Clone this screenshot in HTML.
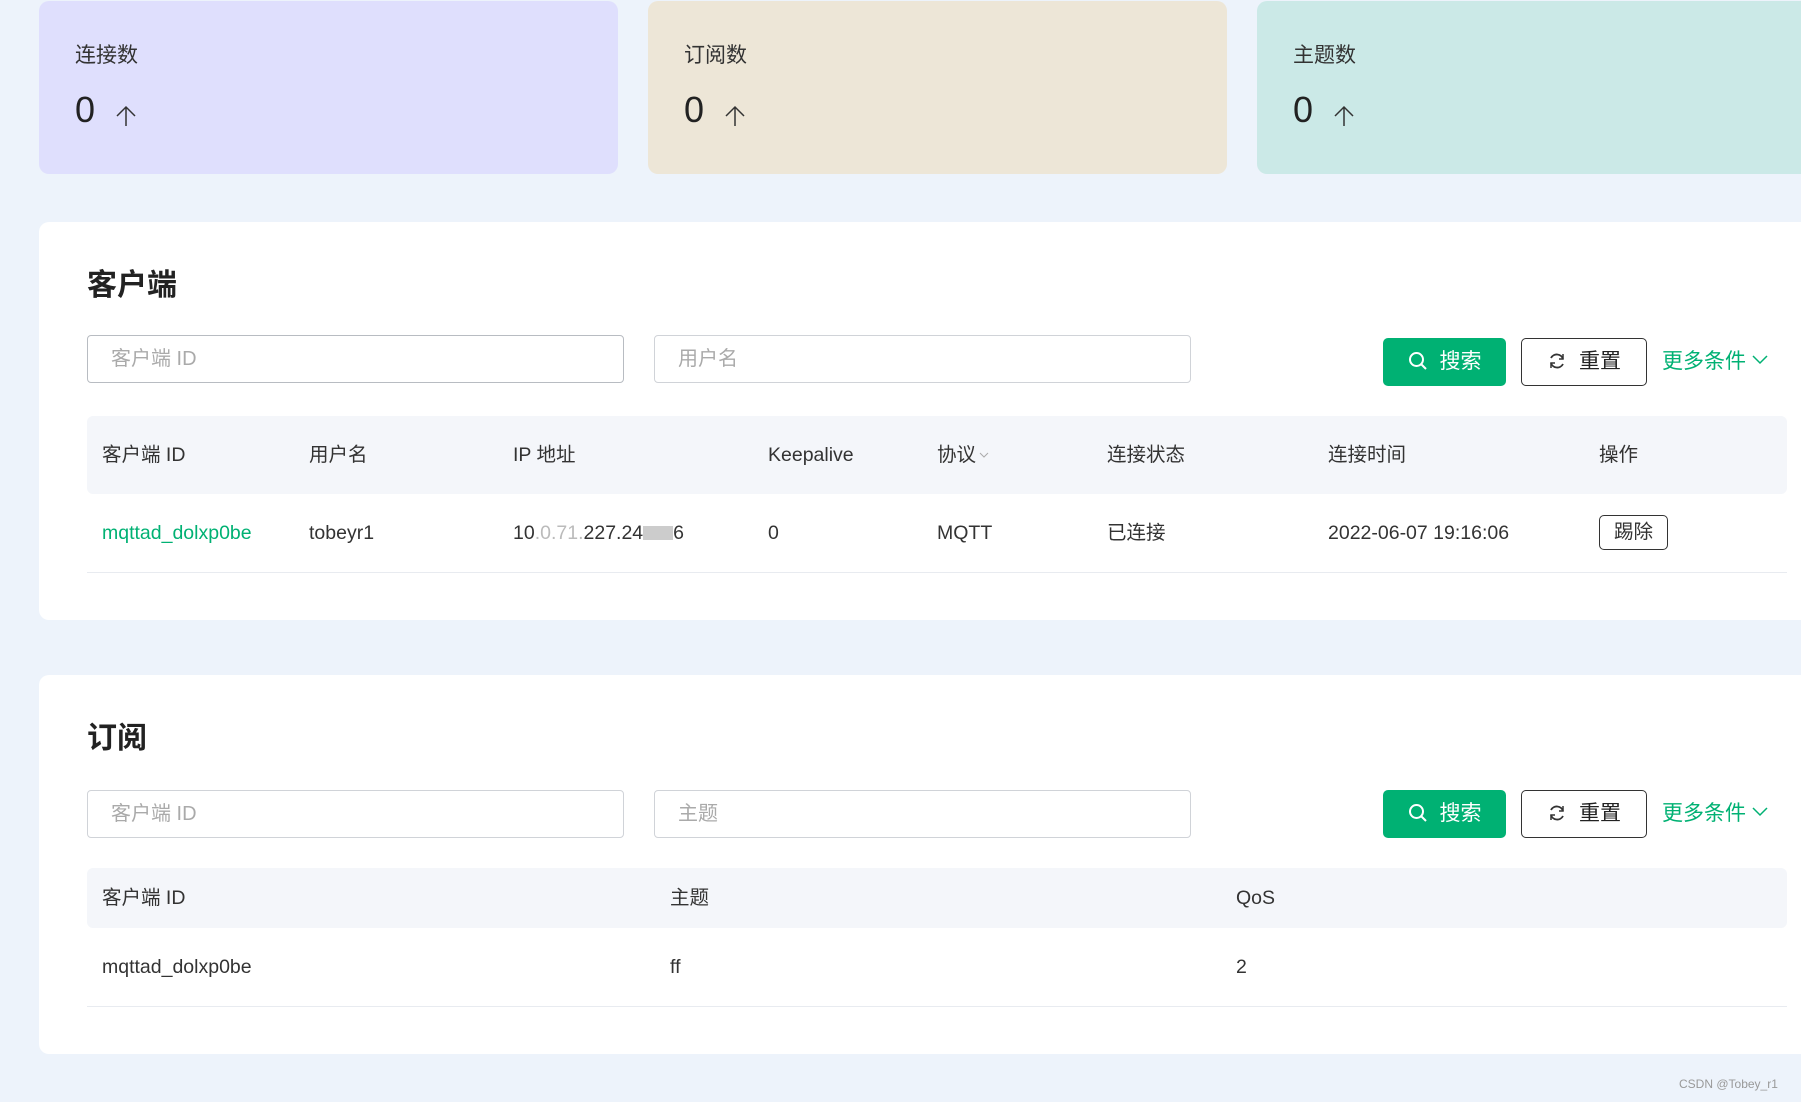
<!DOCTYPE html>
<html><head><meta charset="utf-8"><style>
*{box-sizing:border-box;margin:0;padding:0}
body{width:1801px;height:1102px;background:#edf3fb;font-family:"Liberation Sans","Noto Sans CJK SC",sans-serif;color:#333;position:relative;overflow:hidden}
.abs{position:absolute}
.card{position:absolute;top:1px;height:173px;border-radius:10px}
.card .l{position:absolute;left:36px;top:38px;font-size:21px;color:#333}
.card .n{position:absolute;left:36px;top:88px;font-size:36px;color:#222}
.card .a{position:absolute;left:76px;top:104px}
.panel{position:absolute;left:39px;width:1780px;background:#fff;border-radius:10px}
.title{position:absolute;left:48px;font-size:30px;font-weight:bold;color:#222;line-height:40px}
.inp{position:absolute;height:48px;border:1px solid #d0d3d8;border-radius:4px;font-size:20px;color:#aaa;padding:0 0 0 23px;line-height:46px}
.btn{position:absolute;height:48px;border-radius:5px;font-size:21px;line-height:48px;text-align:center}
.g{background:#00b173;color:#fff}
.o{border:1px solid #333;color:#222;line-height:46px}
.more{position:absolute;font-size:21px;color:#00b173;line-height:30px}
.th{position:absolute;left:48px;width:1700px;background:#f4f6fa;border-radius:6px}
.c{position:absolute;font-size:19.5px;color:#333;white-space:nowrap;line-height:26px;height:26px}
.line{position:absolute;left:48px;width:1700px;height:1px;background:#e8ebf0}
</style></head><body>
<svg width="0" height="0" style="position:absolute"><defs><symbol id="ar" viewBox="0 0 22 22"><path d="M2 11L11 2L20 11M11 2V21" fill="none" stroke="#333" stroke-width="1.5"/></symbol></defs></svg>
<div class="card" style="left:39px;width:579px;background:#dfdffd"><div class="l">连接数</div><div class="n">0</div><svg class="a" width="22" height="22"><use href="#ar"/></svg></div>
<div class="card" style="left:648px;width:579px;background:#ede6d7"><div class="l">订阅数</div><div class="n">0</div><svg class="a" width="22" height="22"><use href="#ar"/></svg></div>
<div class="card" style="left:1257px;width:600px;background:#cbe9e7"><div class="l">主题数</div><div class="n">0</div><svg class="a" width="22" height="22"><use href="#ar"/></svg></div>

<div class="panel" style="top:222px;height:398px">
 <div class="title" style="top:44px">客户端</div>
 <div class="inp" style="left:48px;top:113px;width:537px;border-color:#b8bcc2">客户端 ID</div>
 <div class="inp" style="left:615px;top:113px;width:537px">用户名</div>
 <div class="btn g" style="left:1344px;top:116px;width:123px"><svg width="20" height="20" viewBox="0 0 20 20" style="vertical-align:-3px;margin-right:12px"><circle cx="8.5" cy="8.5" r="6.5" fill="none" stroke="#fff" stroke-width="2"/><path d="M13.5 13.5L18 18" stroke="#fff" stroke-width="2"/></svg>搜索</div>
 <div class="btn o" style="left:1482px;top:116px;width:126px"><svg width="20" height="20" viewBox="0 0 20 20" style="vertical-align:-3px;margin-right:12px"><path d="M16 8A6.5 6.5 0 0 0 4 7M4 12a6.5 6.5 0 0 0 12 1" fill="none" stroke="#333" stroke-width="1.8"/><path d="M16 3v5h-4M4 17v-5h4" fill="none" stroke="#333" stroke-width="1.5"/></svg>重置</div>
 <div class="more" style="left:1623px;top:125px">更多条件 <svg width="16" height="10" viewBox="0 0 16 10" style="vertical-align:3px"><path d="M1 1L8 8L15 1" fill="none" stroke="#00b173" stroke-width="1.5"/></svg></div>
 <div class="th" style="top:194px;height:78px"></div>
 <div class="c" style="left:63px;top:220px">客户端 ID</div>
 <div class="c" style="left:270px;top:220px">用户名</div>
 <div class="c" style="left:474px;top:220px">IP 地址</div>
 <div class="c" style="left:729px;top:220px">Keepalive</div>
 <div class="c" style="left:898px;top:220px">协议<svg width="10" height="6" viewBox="0 0 10 6" style="vertical-align:3px;margin-left:3px"><path d="M1 1L5 5L9 1" fill="none" stroke="#aaa"/></svg></div>
 <div class="c" style="left:1068px;top:220px">连接状态</div>
 <div class="c" style="left:1289px;top:220px">连接时间</div>
 <div class="c" style="left:1560px;top:220px">操作</div>
 <div class="c" style="left:63px;top:298px;color:#00b173">mqttad_dolxp0be</div>
 <div class="c" style="left:270px;top:298px">tobeyr1</div>
 <div class="c" style="left:474px;top:298px">10<span style="color:#bbb">.0.71.</span>227.24<span style="display:inline-block;width:30px;height:14px;background:#ccc;vertical-align:-1px"></span>6</div>
 <div class="c" style="left:729px;top:298px">0</div>
 <div class="c" style="left:898px;top:298px">MQTT</div>
 <div class="c" style="left:1068px;top:298px">已连接</div>
 <div class="c" style="left:1289px;top:298px">2022-06-07 19:16:06</div>
 <div class="abs" style="left:1560px;top:293px;width:69px;height:35px;border:1px solid #333;border-radius:5px;font-size:19.5px;text-align:center;line-height:33px">踢除</div>
 <div class="line" style="top:350px"></div>
</div>

<div class="panel" style="top:675px;height:379px">
 <div class="title" style="top:44px">订阅</div>
 <div class="inp" style="left:48px;top:115px;width:537px">客户端 ID</div>
 <div class="inp" style="left:615px;top:115px;width:537px">主题</div>
 <div class="btn g" style="left:1344px;top:115px;width:123px"><svg width="20" height="20" viewBox="0 0 20 20" style="vertical-align:-3px;margin-right:12px"><circle cx="8.5" cy="8.5" r="6.5" fill="none" stroke="#fff" stroke-width="2"/><path d="M13.5 13.5L18 18" stroke="#fff" stroke-width="2"/></svg>搜索</div>
 <div class="btn o" style="left:1482px;top:115px;width:126px"><svg width="20" height="20" viewBox="0 0 20 20" style="vertical-align:-3px;margin-right:12px"><path d="M16 8A6.5 6.5 0 0 0 4 7M4 12a6.5 6.5 0 0 0 12 1" fill="none" stroke="#333" stroke-width="1.8"/><path d="M16 3v5h-4M4 17v-5h4" fill="none" stroke="#333" stroke-width="1.5"/></svg>重置</div>
 <div class="more" style="left:1623px;top:124px">更多条件 <svg width="16" height="10" viewBox="0 0 16 10" style="vertical-align:3px"><path d="M1 1L8 8L15 1" fill="none" stroke="#00b173" stroke-width="1.5"/></svg></div>
 <div class="th" style="top:193px;height:60px"></div>
 <div class="c" style="left:63px;top:210px">客户端 ID</div>
 <div class="c" style="left:631px;top:210px">主题</div>
 <div class="c" style="left:1197px;top:210px">QoS</div>
 <div class="c" style="left:63px;top:279px">mqttad_dolxp0be</div>
 <div class="c" style="left:631px;top:279px">ff</div>
 <div class="c" style="left:1197px;top:279px">2</div>
 <div class="line" style="top:331px"></div>
</div>
<div class="abs" style="left:1679px;top:1077px;font-size:12px;color:#999">CSDN @Tobey_r1</div>
</body></html>
